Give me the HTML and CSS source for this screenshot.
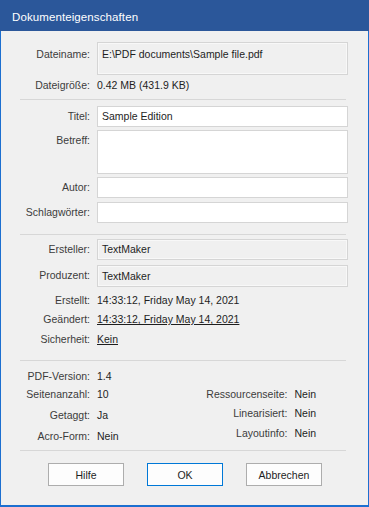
FILE: index.html
```html
<!DOCTYPE html>
<html lang="de">
<head>
    <meta charset="UTF-8">
    <meta name="viewport" content="width=device-width, initial-scale=1.0">
    <title>Dokumenteigenschaften</title>
    <link rel="stylesheet" href="styles.css">
</head>
<body>
    <div class="dialog">
        <div class="titlebar">Dokumenteigenschaften</div>

        <div class="content">
            <div class="row file">
                <span class="label">Dateiname:</span>
                <div class="field readonly tall">E:\PDF documents\Sample file.pdf</div>
            </div>
            <div class="row size">
                <span class="label">Dateigröße:</span>
                <span class="value">0.42 MB (431.9 KB)</span>
            </div>

            <div class="sep sep-1"></div>

            <div class="row titel">
                <span class="label">Titel:</span>
                <div class="field">Sample Edition</div>
            </div>
            <div class="row betreff">
                <span class="label">Betreff:</span>
                <div class="field"></div>
            </div>
            <div class="row autor">
                <span class="label">Autor:</span>
                <div class="field"></div>
            </div>
            <div class="row keywords">
                <span class="label">Schlagwörter:</span>
                <div class="field"></div>
            </div>

            <div class="sep sep-2"></div>

            <div class="row ersteller">
                <span class="label">Ersteller:</span>
                <div class="field readonly">TextMaker</div>
            </div>
            <div class="row produzent">
                <span class="label">Produzent:</span>
                <div class="field readonly">TextMaker</div>
            </div>
            <div class="row line erstellt">
                <span class="label">Erstellt:</span>
                <span class="value">14:33:12, Friday May 14, 2021</span>
            </div>
            <div class="row line">
                <span class="label">Geändert:</span>
                <span class="value link">14:33:12, Friday May 14, 2021</span>
            </div>
            <div class="row line sicherheit">
                <span class="label">Sicherheit:</span>
                <span class="value link">Kein</span>
            </div>

            <div class="sep sep-3"></div>

            <div class="info">
                <div class="info-col left">
                    <div class="row line r1">
                        <span class="label">PDF-Version:</span>
                        <span class="value">1.4</span>
                    </div>
                    <div class="row line r2">
                        <span class="label">Seitenanzahl:</span>
                        <span class="value">10</span>
                    </div>
                    <div class="row line r3">
                        <span class="label">Getaggt:</span>
                        <span class="value">Ja</span>
                    </div>
                    <div class="row line r3">
                        <span class="label">Acro-Form:</span>
                        <span class="value">Nein</span>
                    </div>
                </div>
                <div class="info-col right">
                    <div class="row line r2">
                        <span class="label">Ressourcenseite:</span>
                        <span class="value">Nein</span>
                    </div>
                    <div class="row line">
                        <span class="label">Linearisiert:</span>
                        <span class="value">Nein</span>
                    </div>
                    <div class="row line r4">
                        <span class="label">Layoutinfo:</span>
                        <span class="value">Nein</span>
                    </div>
                </div>
            </div>

            <div class="sep sep-4"></div>

            <div class="buttons">
                <button class="btn">Hilfe</button>
                <button class="btn default">OK</button>
                <button class="btn">Abbrechen</button>
            </div>
        </div>
    </div>
</body>
</html>
```

FILE: styles.css
```css
html, body {
    margin: 0;
    padding: 0;
}
body {
    width: 369px;
    height: 507px;
    background-color: #f0f0f0;
    font-family: 'Liberation Sans', Arial, sans-serif;
    font-size: 10.5px;
    color: #1e1e1e;
}
.dialog {
    box-sizing: border-box;
    width: 369px;
    height: 507px;
    border: 1px solid #1c6fd0;
    border-top: none;
    border-bottom-width: 2px;
    background-color: #f0f0f0;
}
.titlebar {
    box-sizing: border-box;
    height: 31px;
    margin: 0 -1px;
    padding: 4px 0 0 12px;
    background-color: #2b579a;
    color: #ffffff;
    font-size: 11.5px;
    line-height: 27px;
    letter-spacing: 0.1px;
}
.content {
    padding: 11px 20px 0 18px;
}
.row {
    display: grid;
    grid-template-columns: 71px 1fr;
    column-gap: 7px;
}
.label {
    text-align: right;
    color: #3c3c3c;
    white-space: nowrap;
}
.field {
    box-sizing: border-box;
    height: 21px;
    padding: 0 4px;
    line-height: 19px;
    background-color: #ffffff;
    border: 1px solid #d5d5d5;
    white-space: nowrap;
    overflow: hidden;
}
.field.readonly {
    background-color: #f0f0f0;
    box-shadow: inset 0 0 0 1px #f8f8f8;
}
.field.tall {
    height: 33px;
    padding-top: 2px;
}
.row.file .label {
    padding-top: 3px;
    line-height: 19px;
}
.row.size {
    height: 20px;
    line-height: 20px;
}
.row .label,
.row .value {
    line-height: 21px;
}
.row.size .label,
.row.size .value {
    line-height: 20px;
}
.sep {
    height: 1px;
    margin-left: 1px;
    margin-right: 2px;
    background-color: #d7d7d7;
}
.sep-1 { margin-top: 4px; }
.titel { margin-top: 6px; }
.betreff { margin-top: 3px; }
.betreff .field { height: 44px; }
.betreff .label { line-height: 19px; padding-top: 1px; }
.autor { margin-top: 3px; }
.keywords { margin-top: 4px; }
.sep-2 { margin-top: 11px; }
.ersteller { margin-top: 4px; }
.produzent { margin-top: 5px; }
.produzent .field { height: 22px; line-height: 20px; }
.row.line {
    height: 19px;
}
.row.line .label,
.row.line .value {
    line-height: 19px;
}
.erstellt { margin-top: 4px; }
.sicherheit { margin-top: 1px; }
.link {
    text-decoration: underline;
}
.sep-3 { margin-top: 11px; }
.info {
    display: flex;
    height: 83px;
    margin-top: 6px;
}
.info-col.left {
    width: 180px;
}
.info-col.right .row {
    grid-template-columns: 89px 1fr;
}
.info-col.right {
    width: 150px;
}
.info .r2 { margin-top: 0; }
.info-col.left .r1 { margin-bottom: -1px; }
.info-col.left .r3 { margin-top: 2px; }
.info-col.right .r2 { margin-top: 18px; }
.info-col.right .r4 { margin-top: 1px; }
.sep-4 { margin-top: 0; }
.buttons {
    display: flex;
    gap: 23px;
    margin-top: 12px;
    padding-left: 29px;
}
.btn {
    box-sizing: border-box;
    width: 76px;
    height: 23px;
    padding: 0;
    background-color: #fdfdfd;
    border: 1px solid #adadad;
    font-family: 'Liberation Sans', Arial, sans-serif;
    font-size: 10.5px;
    color: #1e1e1e;
}
.btn.default {
    border-color: #0078d7;
}
```
